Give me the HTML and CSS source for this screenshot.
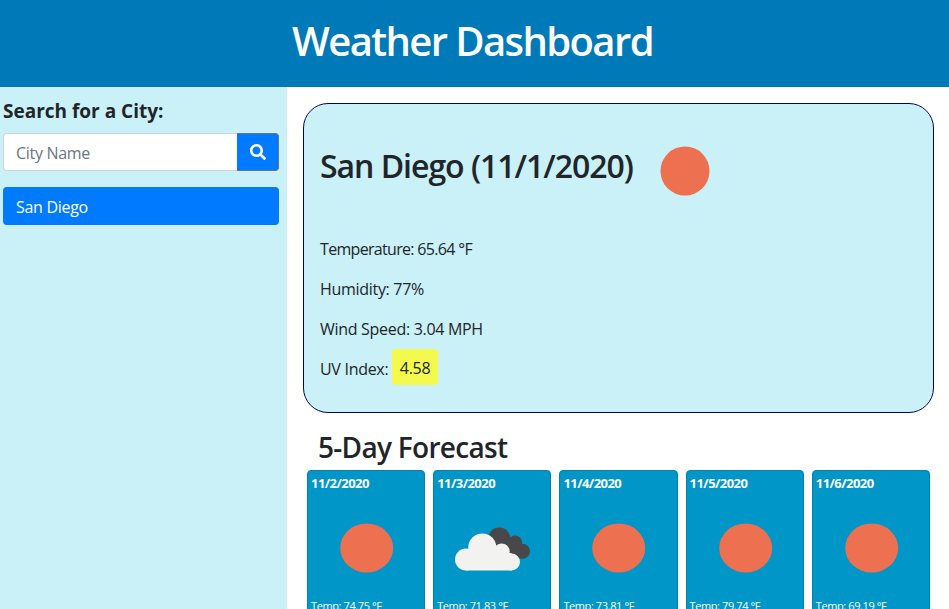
FILE: index.html
```html
<!DOCTYPE html>
<html lang="en">
<head>
<meta charset="utf-8">
<title>Weather Dashboard</title>
<link rel="stylesheet" href="styles.css">
</head>
<body>
<header class="top"><h1>Weather Dashboard</h1></header>
<div class="layout">
  <aside class="side">
    <h2 class="side-title">Search for a City:</h2>
    <form class="search">
      <input class="search-input" placeholder="City Name" type="text">
      <button class="search-btn" type="button" aria-label="Search">
        <svg viewBox="0 0 512 512" width="16" height="16"><path fill="#fff" d="M505 442.700L405.300 343c-4.500-4.500-10.600-7-17-7H372c27.600-35.300 44-79.700 44-128C416 93.100 322.900 0 208 0S0 93.100 0 208s93.100 208 208 208c48.300 0 92.700-16.400 128-44v16.300c0 6.400 2.500 12.500 7 17l99.700 99.700c9.400 9.400 24.600 9.400 33.900 0l28.300-28.300c9.400-9.400 9.400-24.600.1-34zM208 336c-70.700 0-128-57.200-128-128 0-70.700 57.200-128 128-128 70.700 0 128 57.200 128 128 0 70.700-57.200 128-128 128z"/></svg>
      </button>
    </form>
    <div class="city">San Diego</div>
  </aside>
  <main class="main">
    <section class="today">
      <div class="today-head">
        <h2 class="today-title">San Diego (11/1/2020)</h2>
        <svg class="today-sun" viewBox="0 0 50 50" width="50" height="50"><circle cx="25" cy="25" r="24.500" fill="#ed7050"/></svg>
      </div>
      <p class="stat stat-temp">Temperature: 65.64 °F</p>
      <p class="stat">Humidity: 77%</p>
      <p class="stat">Wind Speed: 3.04 MPH</p>
      <p class="stat uv-row">UV Index: <span class="uv">4.58</span></p>
    </section>
    <h2 class="forecast-title">5-Day Forecast</h2>
    <div class="cards">
      <article class="card">
        <div class="date">11/2/2020</div>
        <svg class="icon" viewBox="0 0 80 80"><ellipse cx="40.700" cy="39" rx="26.500" ry="24.500" fill="#ed7050"/></svg>
        <div class="temp">Temp: 74.75 °F</div>
      </article>
      <article class="card">
        <div class="date">11/3/2020</div>
        <svg class="icon" viewBox="0 0 80 80">
          <g fill="#48484a"><circle cx="47.300" cy="29.500" r="11"/><circle cx="63" cy="33.500" r="7"/><circle cx="70.500" cy="42.200" r="7.500"/><rect x="44" y="32" width="26" height="17.500"/></g>
          <g fill="#f2f2f0"><circle cx="14" cy="50.500" r="11"/><circle cx="30.300" cy="38.500" r="14"/><circle cx="49.700" cy="42.500" r="8"/><circle cx="59.500" cy="53" r="8.500"/><rect x="14" y="44" width="45.500" height="17.500"/></g>
        </svg>
        <div class="temp">Temp: 71.83 °F</div>
      </article>
      <article class="card">
        <div class="date">11/4/2020</div>
        <svg class="icon" viewBox="0 0 80 80"><ellipse cx="40.700" cy="39" rx="26.500" ry="24.500" fill="#ed7050"/></svg>
        <div class="temp">Temp: 73.81 °F</div>
      </article>
      <article class="card">
        <div class="date">11/5/2020</div>
        <svg class="icon" viewBox="0 0 80 80"><ellipse cx="40.700" cy="39" rx="26.500" ry="24.500" fill="#ed7050"/></svg>
        <div class="temp">Temp: 79.74 °F</div>
      </article>
      <article class="card">
        <div class="date">11/6/2020</div>
        <svg class="icon" viewBox="0 0 80 80"><ellipse cx="40.700" cy="39" rx="26.500" ry="24.500" fill="#ed7050"/></svg>
        <div class="temp">Temp: 69.19 °F</div>
      </article>
    </div>
  </main>
</div>
</body>
</html>
```

FILE: styles.css
```css
* { box-sizing: border-box; }
html, body { margin: 0; height: 100%; overflow: hidden; }
body { font-family: "Open Sans", "Noto Sans", sans-serif; color: #212529; background: #fff; font-size: 16px; letter-spacing: -0.3px; }
.top { height: 87px; background: #0079b9; display: flex; align-items: center; justify-content: center; }
.top h1 { margin: 0 4px 6px 0; color: #fff; font-size: 40px; font-weight: 600; line-height: 48px; letter-spacing: -1.6px; }
.layout { display: flex; height: 522px; }
.side { width: 287px; flex: none; background: #caf0f8; padding: 12px 8px 0 3px; }
.side-title { margin: 0 0 10px; font-size: 19px; font-weight: 700; line-height: 24px; letter-spacing: 0; }
.search { display: flex; height: 38px; }
.search-input { flex: 1; min-width: 0; border: 1px solid #ced4da; border-right: 0; border-radius: 4px 0 0 4px; padding: 2px 12px 0; font: inherit; letter-spacing: -0.3px; background: #fff; color: #495057; }
.search-input::placeholder { color: #6c757d; opacity: 1; }
.search-btn { width: 42px; flex: none; background: #007bff; border: 1px solid #6c757d; border-left: 0; border-radius: 0 4px 4px 0; padding: 0; display: flex; align-items: center; justify-content: center; }
.city { margin-top: 16px; height: 38px; background: #007bff; color: #fff; border-radius: 4px; padding: 1px 13px 0; line-height: 38px; }
.main { flex: 1; min-width: 0; padding: 16px 15px 0 16px; }
.today { height: 310px; background: #caf0f8; border: 1px solid #03045e; border-radius: 25px; padding: 0 16px; }
.today-head { display: flex; align-items: center; height: 125px; padding-top: 7px; }
.today-title { margin: 0 0 8px; font-size: 32px; font-weight: 600; line-height: 38px; letter-spacing: -1.03px; }
.today-sun { margin: 2px 0 0 27px; }
.stat { margin: 0; height: 40px; line-height: 40px; }
.stat-temp { letter-spacing: -0.68px; }
.uv-row { display: flex; align-items: center; gap: 4px; }
.uv { background: #f4f94e; border-radius: 4px; padding: 0 7.500px; height: 36px; line-height: 38px; margin-bottom: 4px; }
.forecast-title { margin: 17px 0 6px 15px; font-size: 28px; font-weight: 600; line-height: 34px; letter-spacing: -0.7px; }
.cards { display: flex; gap: 8px; padding: 0 4px; }
.card { width: 118.200px; flex: none; height: 190px; background: #0096c7; border: 1px solid #0083ad; border-radius: 4px; color: #fff; padding: 4px 3px 0; }
.date { font-size: 13px; font-weight: 700; line-height: 17px; letter-spacing: -0.55px; }
.icon { display: block; width: 80px; height: 80px; margin: 17px auto 0; }
.temp { margin-top: 9px; font-size: 11px; line-height: 16px; letter-spacing: -0.4px; }
```
